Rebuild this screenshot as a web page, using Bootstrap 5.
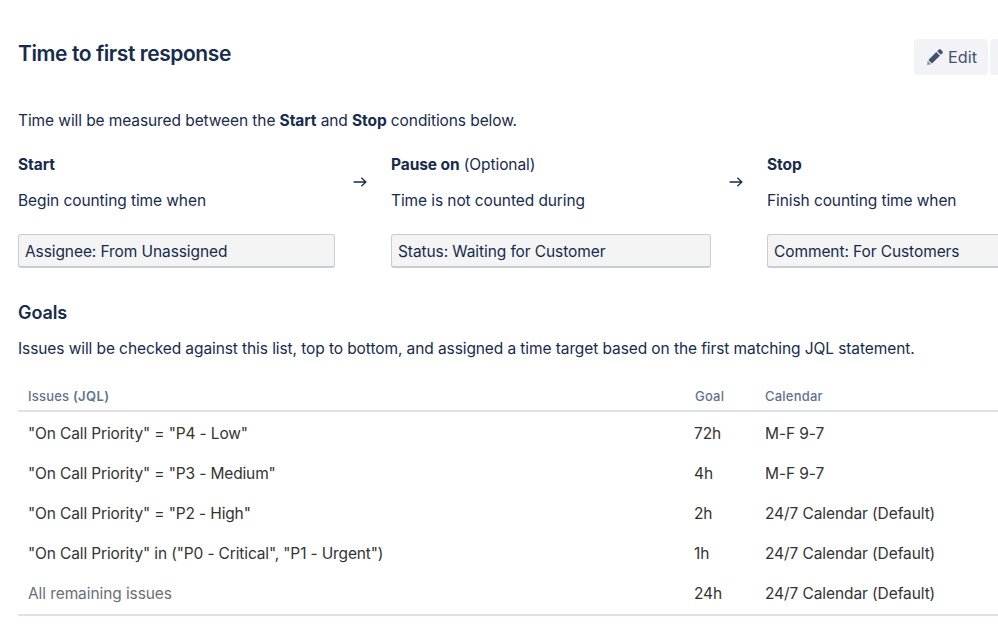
<!DOCTYPE html>
<html lang="en">
<head>
<meta charset="utf-8">
<title>Time to first response</title>
<link href="https://cdn.jsdelivr.net/npm/bootstrap@5.3.0/dist/css/bootstrap.min.css" rel="stylesheet">
<style>
html, body { height: 100%; overflow: hidden; }
body { font-family: Inter, "Noto Sans", sans-serif; font-size: 15.5px; letter-spacing: -.09px; color: #172b4d; background: #fff; }
.sheet { padding: 0 0 0 18px; width: 998px; overflow: hidden; }
.head-row { height: 102px; padding-top: 39px; }
.page-title { font-size: 21px; letter-spacing: -.42px; line-height: 28px; font-weight: 600; margin: 1px 0 0; color: #172b4d; }
.edit-btn { width: 74px; height: 36px; background: #f2f3f6; border: 0; border-radius: 4px; color: #42526e; font-size: 16.3px; letter-spacing: 0; padding: 0 0 0 2px; margin-right: 2px; gap: 5px; }
.edit-stub { width: 8px; height: 36px; background: #f2f3f6; border-radius: 4px 0 0 4px; }
.intro { line-height: 24px; margin: 7px 0 0; }
.cond-row { margin-top: 21px; width: 1100px; }
.cond-col { flex: none; }
.cond-a { width: 317px; }
.cond-b { width: 320px; }
.cond-c { width: 300px; }
.arrow-col { flex: none; width: 56px; padding: 21px 6px 0 0; }
.arrow-col svg { display: block; }
.cond-name { line-height: 24px; height: 24px; margin-top: -1px; }
.cond-name b, .intro b { font-weight: 700; }
.cond-sub { line-height: 24px; margin-top: 12px; }
.cond-box { margin-top: 21px; height: 34px; line-height: 33px; background: #f4f4f4; border: 1px solid #c9ccd2; border-bottom-width: 2px; border-radius: 3px; padding: 0 6px; white-space: nowrap; }
.goals-title { font-size: 18px; letter-spacing: -.1px; line-height: 24px; font-weight: 600; margin: 33px 0 0; color: #172b4d; }
.goals-note { line-height: 24px; margin: 12px 0 0; }
.goal-table { width: 980px; margin: 23px 0 0; table-layout: fixed; border-collapse: collapse; }
.goal-table th { font-size: 13px; letter-spacing: .2px; font-weight: 500; color: #64728e; height: 27px; padding: 0 0 0 10px; vertical-align: middle; border-bottom: 2px solid #e0e1e8; }
.goal-table th b { font-weight: 600; letter-spacing: .4px; }
.goal-table td { height: 40px; padding: 0 0 0 10px; line-height: 24px; color: #333; vertical-align: middle; border: 0; white-space: nowrap; }
.goal-table td:first-child { letter-spacing: -.14px; }
.goal-table td:nth-child(2) { padding-left: 9px; }
.goal-table tbody tr:first-child td { height: 43px; padding-top: 2px; }
.goal-table tbody tr:last-child td { height: 41px; padding-bottom: 1px; border-bottom: 2px solid #e0e1e8; }
.goal-table td.muted-cell { color: #6b6f76; letter-spacing: -.09px; }
.goal-c1 { width: 667px; }
.goal-c2 { width: 70px; }
</style>
</head>
<body>
<div class="sheet">
  <div class="d-flex justify-content-between align-items-start head-row">
    <h1 class="page-title">Time to first response</h1>
    <div class="d-flex">
      <button type="button" class="edit-btn d-flex align-items-center justify-content-center">
        <svg width="16" height="16" viewBox="0 0 15 15" aria-hidden="true"><path fill="#42526e" d="M11 .6a1.4 1.4 0 0 1 2 0l1.4 1.4a1.4 1.4 0 0 1 0 2L13 5.4 9.6 2zM8.7 2.9l3.4 3.4-7.4 7.4-3.4-3.4z"/><path fill="#8993a4" d="M.7 11.1l3.2 3.2-3.9.7z"/></svg>
        <span>Edit</span>
      </button>
      <div class="edit-stub"></div>
    </div>
  </div>
  <p class="intro">Time will be measured between the <b>Start</b> and <b>Stop</b> conditions below.</p>
  <div class="d-flex cond-row">
    <div class="cond-col cond-a">
      <div class="cond-name"><b>Start</b></div>
      <div class="cond-sub">Begin counting time when</div>
      <div class="cond-box">Assignee: From Unassigned</div>
    </div>
    <div class="arrow-col d-flex justify-content-center">
      <svg width="14" height="14" viewBox="0 0 12 12" aria-hidden="true"><path fill="none" stroke="#172b4d" stroke-width="1.1" d="M.5 6h10.5M7.2 2.4 11 6l-3.8 3.6"/></svg>
    </div>
    <div class="cond-col cond-b">
      <div class="cond-name"><b>Pause on</b> (Optional)</div>
      <div class="cond-sub">Time is not counted during</div>
      <div class="cond-box">Status: Waiting for Customer</div>
    </div>
    <div class="arrow-col d-flex justify-content-center">
      <svg width="14" height="14" viewBox="0 0 12 12" aria-hidden="true"><path fill="none" stroke="#172b4d" stroke-width="1.1" d="M.5 6h10.5M7.2 2.4 11 6l-3.8 3.6"/></svg>
    </div>
    <div class="cond-col cond-c">
      <div class="cond-name"><b>Stop</b></div>
      <div class="cond-sub">Finish counting time when</div>
      <div class="cond-box">Comment: For Customers</div>
    </div>
  </div>
  <h2 class="goals-title">Goals</h2>
  <p class="goals-note">Issues will be checked against this list, top to bottom, and assigned a time target based on the first matching JQL statement.</p>
  <table class="goal-table">
    <thead>
      <tr><th class="goal-c1">Issues <b>(JQL)</b></th><th class="goal-c2">Goal</th><th>Calendar</th></tr>
    </thead>
    <tbody>
      <tr><td>"On Call Priority" = "P4 - Low"</td><td>72h</td><td>M-F 9-7</td></tr>
      <tr><td>"On Call Priority" = "P3 - Medium"</td><td>4h</td><td>M-F 9-7</td></tr>
      <tr><td>"On Call Priority" = "P2 - High"</td><td>2h</td><td>24/7 Calendar (Default)</td></tr>
      <tr><td>"On Call Priority" in ("P0 - Critical", "P1 - Urgent")</td><td>1h</td><td>24/7 Calendar (Default)</td></tr>
      <tr><td class="muted-cell">All remaining issues</td><td>24h</td><td>24/7 Calendar (Default)</td></tr>
    </tbody>
  </table>
</div>
<script src="https://cdn.jsdelivr.net/npm/bootstrap@5.3.0/dist/js/bootstrap.bundle.min.js"></script>
</body>
</html>
